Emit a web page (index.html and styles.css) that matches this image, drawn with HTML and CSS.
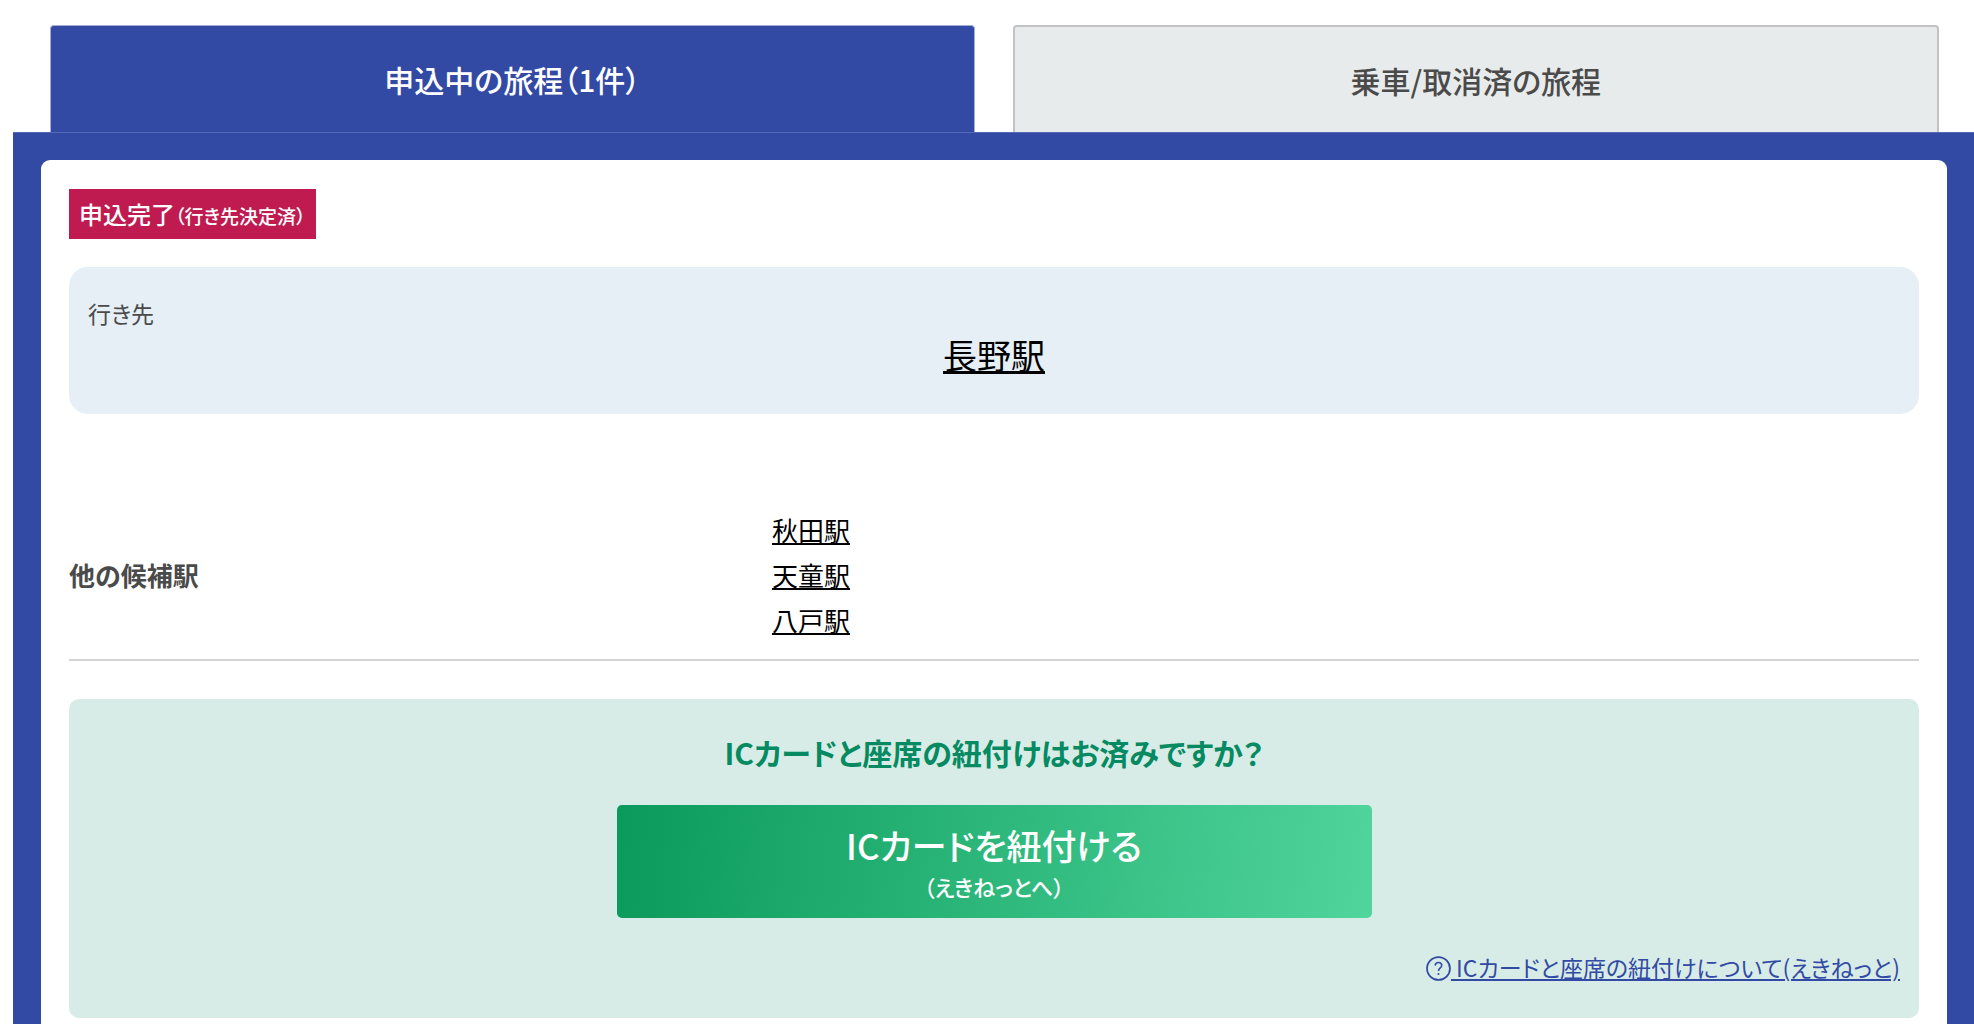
FILE: index.html
```
<!DOCTYPE html>
<html lang="ja">
<head>
    <meta charset="UTF-8">
    <meta name="viewport" content="width=device-width, initial-scale=1.0">
    <title>旅程一覧</title>
    <link rel="stylesheet" href="styles.css">
</head>
<body>
    <nav class="tabs">
        <button type="button" class="tab tab-active">申込中の旅程（1件）</button>
        <button type="button" class="tab">乗車/取消済の旅程</button>
    </nav>
    <main class="panel">
        <section class="card">
            <p class="status">申込完了<span class="status-note">（行き先決定済）</span></p>

            <div class="destination">
                <p class="destination-label">行き先</p>
                <p class="destination-name"><a href="#nagano">長野駅</a></p>
            </div>

            <dl class="candidates">
                <dt>他の候補駅</dt>
                <dd><a href="#akita">秋田駅</a></dd>
                <dd><a href="#tendo">天童駅</a></dd>
                <dd><a href="#hachinohe">八戸駅</a></dd>
            </dl>

            <div class="ic-box">
                <h2 class="ic-title">ICカードと座席の紐付けはお済みですか？</h2>
                <button type="button" class="ic-button">
                    <span class="ic-button-main">ICカードを紐付ける</span>
                    <span class="ic-button-sub">（えきねっとへ）</span>
                </button>
                <p class="ic-help">
                    <a href="#about"><svg class="help-icon" viewBox="0 0 24 24" fill="none" stroke="currentColor" xmlns="http://www.w3.org/2000/svg">
                        <circle cx="12" cy="12" r="11" stroke-width="1.7"/>
                        <path d="M8.8 9.2C9 7.3 10.2 6.3 12 6.3C13.9 6.3 15.1 7.4 15.1 9C15.1 11.3 12 11.6 12 14.3" stroke-width="1.5"/>
                        <circle cx="12" cy="17.2" r="1" fill="currentColor" stroke="none"/>
                    </svg> ICカードと座席の紐付けについて(えきねっと)</a>
                </p>
            </div>
        </section>
    </main>
</body>
</html>
```

FILE: styles.css
```
:root {
    --blue: #334aa5;
    --text: #4a4a4a;
    --green: #058a62;
}

* {
    box-sizing: border-box;
}

body {
    font-family: 'Noto Sans CJK JP', sans-serif;
    font-feature-settings: 'palt';
    margin: 0;
    padding: 25px 0 0 13px;
    min-height: 100vh;
    display: flex;
    flex-direction: column;
    background-color: #fff;
    color: var(--text);
}

p, h2, dl, dd {
    margin: 0;
}

a {
    color: #000;
}

button {
    font-family: inherit;
    font-feature-settings: inherit;
    cursor: pointer;
}

/* タブ */
.tabs {
    display: flex;
    gap: 38px;
    padding: 0 35px 0 37px;
}

.tab {
    flex: 1;
    height: 107px;
    padding: 0;
    border: 2px solid #c0c2c4;
    border-bottom: none;
    border-radius: 4px 4px 0 0;
    background-color: #e8ebeb;
    color: var(--text);
    font-size: 30px;
    font-weight: 500;
}

.tab-active {
    border: 1px solid #a3add6;
    border-bottom: none;
    background-color: var(--blue);
    color: #fff;
}

.panel {
    flex: 1;
    display: flex;
    flex-direction: column;
    padding: 27px 27px 0 28px;
    border-top: 1px solid #5569b8;
    background-color: var(--blue);
}

.card {
    flex: 1;
    padding: 29px 28px 7px;
    border-radius: 9px 9px 0 0;
    background-color: #fff;
}

.status {
    width: fit-content;
    padding: 0 10px;
    background-color: #c01b50;
    color: #fff;
    font-size: 24px;
    font-weight: 500;
    line-height: 50px;
}

.status-note {
    font-size: 19px;
    line-height: 24px;
}

/* 行き先 */
.destination {
    margin-top: 28px;
    padding: 31px 19px 34px;
    border-radius: 19px;
    background-color: #e6eef6;
}

.destination-label {
    font-size: 23px;
    line-height: 31px;
}

.destination-name {
    font-size: 34px;
    line-height: 51px;
    text-align: center;
}

/* 他の候補駅 */
.candidates {
    display: grid;
    grid-template-columns: 38% 1fr;
    align-items: center;
    margin-top: 93px;
    padding-bottom: 17px;
    border-bottom: 2px solid #d3d4d4;
    font-size: 26px;
    line-height: 45px;
}

.candidates dt {
    grid-row: 1 / span 3;
    font-weight: 700;
}

.candidates dd {
    grid-column: 2;
}

/* ICカード */
.ic-box {
    display: flex;
    flex-direction: column;
    align-items: center;
    margin-top: 38px;
    padding: 31px 19px 34px;
    border-radius: 10px;
    background-color: #d8ece7;
}

.ic-title {
    color: var(--green);
    font-size: 30px;
    font-weight: 700;
    line-height: 45px;
}

.ic-button {
    display: flex;
    flex-direction: column;
    align-items: center;
    width: 100%;
    max-width: 755px;
    margin-top: 30px;
    padding: 17px 0 13px;
    border: none;
    border-radius: 5px;
    background: linear-gradient(97deg, #0b9a5b 0%, #50d59c 100%);
    color: #fff;
    font-weight: 500;
}

.ic-button-main {
    font-size: 35px;
    line-height: 45px;
}

.ic-button-sub {
    font-size: 22px;
    line-height: 38px;
}

.ic-help {
    align-self: flex-end;
    margin-top: 32px;
    font-size: 23px;
    line-height: 34px;
}

.ic-help a {
    color: var(--blue);
}

.help-icon {
    width: 25px;
    height: 25px;
    vertical-align: -4px;
}
```
